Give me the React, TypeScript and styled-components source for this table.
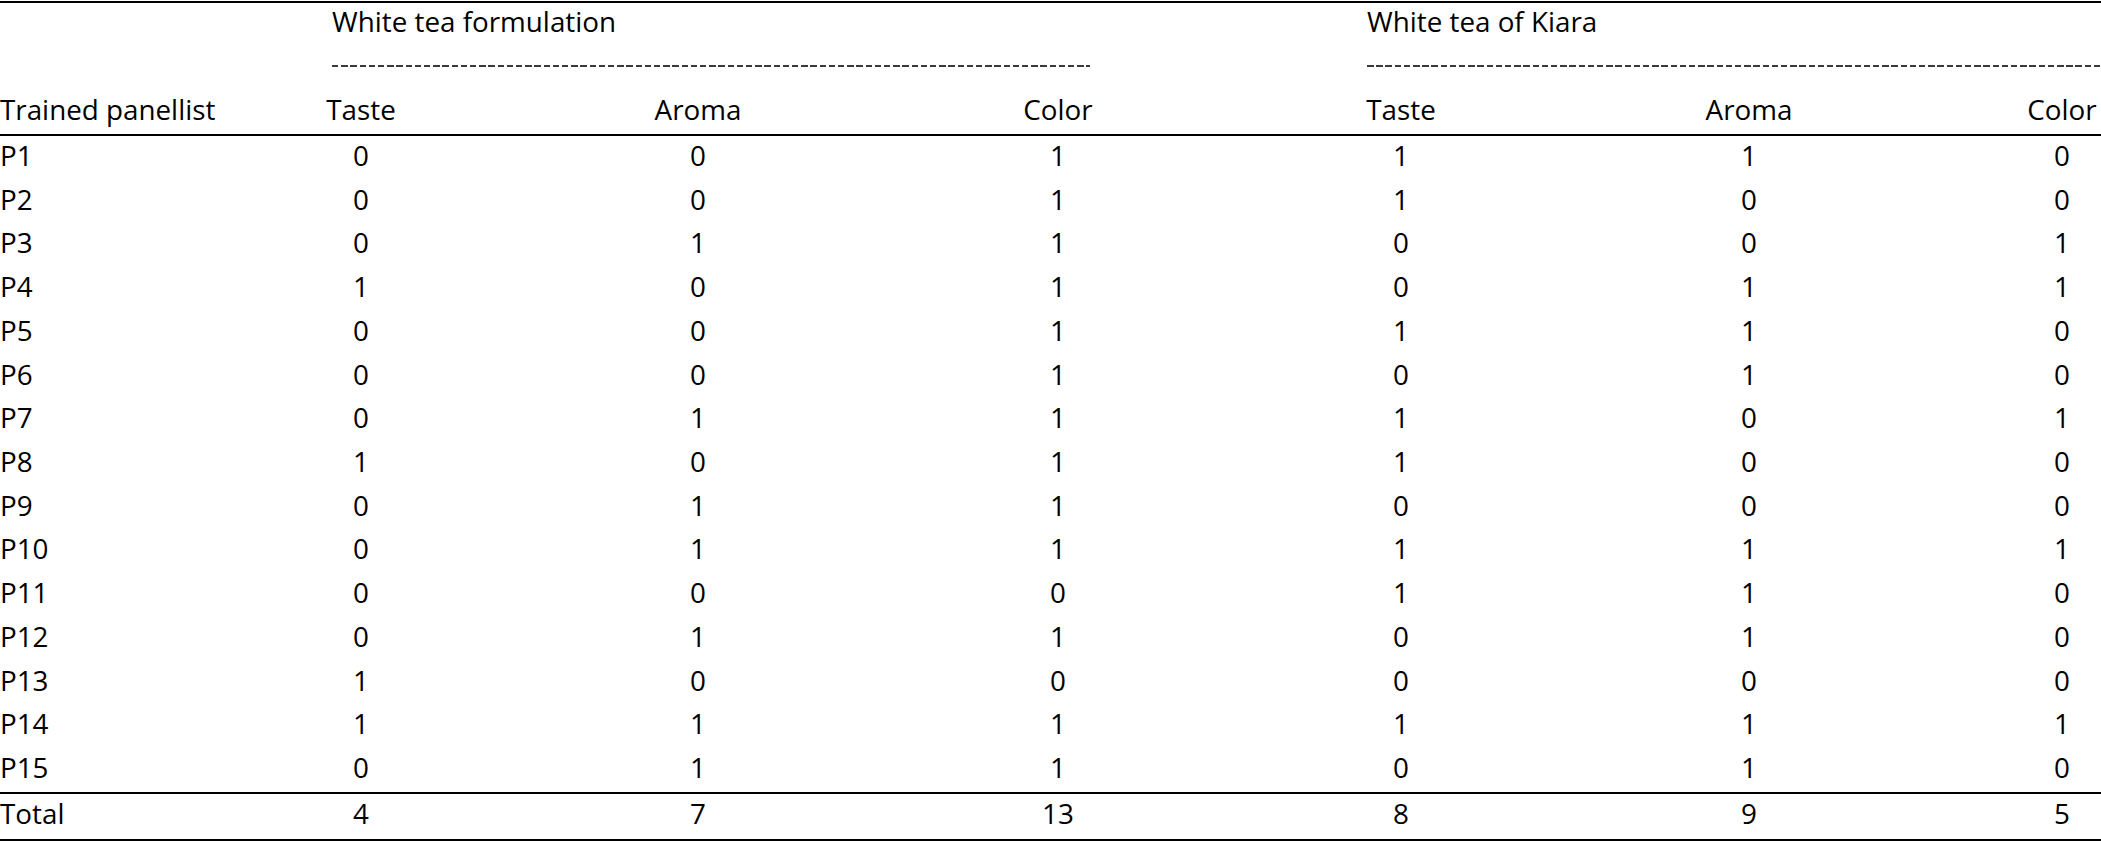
import React from "react";
import styled, { createGlobalStyle } from "styled-components";

const GlobalStyle = createGlobalStyle`
  html, body {
    margin: 0;
    padding: 0;
    background: #ffffff;
    overflow: hidden;
  }
  body {
    font-family: "Open Sans", "Noto Sans", "Liberation Sans", sans-serif;
    color: #000000;
  }
`;

const COLS =
  "326px 70px 253px 98px 267px 88px 255px 88px 260px 88px 232px 74px 2px";

const Page = styled.div`
  width: 2101px;
  padding-top: 1px;
`;

const Table = styled.div`
  display: flex;
  flex-direction: column;
  border-top: 2px solid #000;
  border-bottom: 2px solid #000;
  font-size: 27.8px;
  font-weight: 400;
`;

const Head = styled.div`
  display: flex;
  flex-direction: column;
  border-bottom: 2px solid #000;
`;

const GroupRow = styled.div<{ $h: number }>`
  display: grid;
  grid-template-columns: 332px 758px 277px 1fr;
  height: ${(p) => p.$h}px;
  align-items: center;
`;

const GroupTitle = styled.div<{ $col: number }>`
  grid-column: ${(p) => p.$col};
  white-space: nowrap;
  line-height: 1;
  padding-bottom: 3px;
`;

const Dashes = styled.div<{ $col: number }>`
  grid-column: ${(p) => p.$col};
  height: 2px;
  background: repeating-linear-gradient(
    to right,
    #3a3a3a 0,
    #3a3a3a 6.5px,
    transparent 6.5px,
    transparent 9.2px
  );
`;

const Row = styled.div<{ $h: number; $top?: boolean }>`
  display: grid;
  grid-template-columns: ${COLS};
  height: ${(p) => p.$h}px;
  align-items: center;
  border-top: ${(p) => (p.$top ? "2px solid #000" : "none")};
`;

const Label = styled.div`
  grid-column: 1;
  white-space: nowrap;
  line-height: 1;
  padding-bottom: 4px;
`;

const Cell = styled.div<{ $col: number }>`
  grid-column: ${(p) => p.$col};
  justify-self: center;
  white-space: nowrap;
  line-height: 1;
  padding-bottom: 4px;
`;

const Body = styled.div`
  display: flex;
  flex-direction: column;
`;

const DATA_COLS = [2, 4, 6, 8, 10, 12];
const HEADERS = ["Taste", "Aroma", "Color", "Taste", "Aroma", "Color"];

const ROWS: [string, number[]][] = [
  ["P1", [0, 0, 1, 1, 1, 0]],
  ["P2", [0, 0, 1, 1, 0, 0]],
  ["P3", [0, 1, 1, 0, 0, 1]],
  ["P4", [1, 0, 1, 0, 1, 1]],
  ["P5", [0, 0, 1, 1, 1, 0]],
  ["P6", [0, 0, 1, 0, 1, 0]],
  ["P7", [0, 1, 1, 1, 0, 1]],
  ["P8", [1, 0, 1, 1, 0, 0]],
  ["P9", [0, 1, 1, 0, 0, 0]],
  ["P10", [0, 1, 1, 1, 1, 1]],
  ["P11", [0, 0, 0, 1, 1, 0]],
  ["P12", [0, 1, 1, 0, 1, 0]],
  ["P13", [1, 0, 0, 0, 0, 0]],
  ["P14", [1, 1, 1, 1, 1, 1]],
  ["P15", [0, 1, 1, 0, 1, 0]],
];

const TOTALS = [4, 7, 13, 8, 9, 5];

export default function App() {
  return (
    <>
      <GlobalStyle />
      <Page>
        <Table>
          <Head>
            <GroupRow $h={40}>
              <GroupTitle $col={2}>White tea formulation</GroupTitle>
              <GroupTitle $col={4}>White tea of Kiara</GroupTitle>
            </GroupRow>
            <GroupRow $h={46}>
              <Dashes $col={2} />
              <Dashes $col={4} />
            </GroupRow>
            <Row $h={45}>
              <Label>Trained panellist</Label>
              {HEADERS.map((h, i) => (
                <Cell key={i} $col={DATA_COLS[i]}>
                  {h}
                </Cell>
              ))}
            </Row>
          </Head>
          <Body>
            {ROWS.map(([name, vals]) => (
              <Row key={name} $h={43.73}>
                <Label>{name}</Label>
                {vals.map((v, i) => (
                  <Cell key={i} $col={DATA_COLS[i]}>
                    {v}
                  </Cell>
                ))}
              </Row>
            ))}
          </Body>
          <Row $h={45} $top>
            <Label>Total</Label>
            {TOTALS.map((v, i) => (
              <Cell key={i} $col={DATA_COLS[i]}>
                {v}
              </Cell>
            ))}
          </Row>
        </Table>
      </Page>
    </>
  );
}
